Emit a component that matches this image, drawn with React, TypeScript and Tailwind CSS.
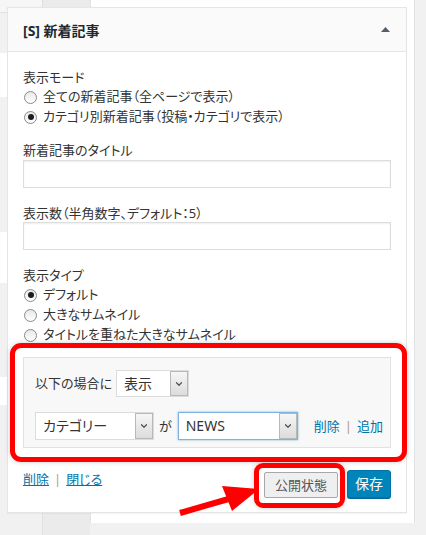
import { ChevronDown } from "lucide-react";

function Radio({ checked, label }: { checked?: boolean; label: string }) {
  return (
    <label className="flex items-center h-[20px]">
      <span className="ml-px w-[13px] h-[13px] shrink-0 rounded-full border border-[#8a8a8a] bg-[linear-gradient(#e8e8e8,#fff)] flex items-center justify-center">
        {checked && <span className="w-[6px] h-[6px] rounded-full bg-[#1c1c1c]" />}
      </span>
      <span className="ml-[6px] whitespace-nowrap">{label}</span>
    </label>
  );
}

function Select({
  value,
  className,
  focused,
}: {
  value: string;
  className: string;
  focused?: boolean;
}) {
  return (
    <div
      className={`${className} shrink-0 flex items-stretch bg-white border ${
        focused
          ? "border-[#7fb3df] shadow-[0_0_2px_rgba(30,140,190,0.6)]"
          : "border-[#dcdcdc]"
      }`}
    >
      <span className="flex-1 pl-[7px] flex items-center text-[14px] text-[#333] leading-none whitespace-nowrap">
        {value}
      </span>
      <span className="w-[18px] flex items-center justify-center border border-[#b8b8b8] bg-[linear-gradient(#f6f6f6,#dcdcdc)]">
        <ChevronDown size={10} strokeWidth={3} color="#555" />
      </span>
    </div>
  );
}

function TextInput() {
  return (
    <div className="h-[28px] bg-white border border-[#dddddd] shadow-[inset_0_1px_2px_rgba(0,0,0,0.07)]" />
  );
}

export default function App() {
  return (
    <div className="relative w-[426px] h-[535px] overflow-hidden bg-[#f1f1f1] font-['Noto_Sans','Noto_Sans_CJK_JP',sans-serif] [font-feature-settings:'palt'] text-[13px] text-[#333]">
      {/* admin columns behind the widget */}
      <div className="flex h-full">
        <div className="w-[42px] flex flex-col">
          <div className="h-[13px] bg-[#f6f6f6] border-b border-[#e2e2e2]" />
          <div className="h-[40px]" />
          <div className="h-[44px] bg-white" />
          <div className="h-[135px]" />
          <div className="h-[51px] bg-white" />
          <div className="h-[94px]" />
          <div className="h-[28px] bg-white" />
        </div>
        <div className="w-[48px] bg-[#ebebeb] border-l border-[#e0e0e0]" />
        <div className="w-[325px] h-[523px] bg-white border-l border-r border-[#e2e2e2]" />
      </div>

      {/* widget panel */}
      <div className="absolute left-[7px] top-[7px] w-[400px] bg-white border border-[#e5e5e5] shadow-[0_1px_1px_rgba(0,0,0,0.04)]">
        <div className="h-[44px] bg-[#fafafa] border-b border-[#e5e5e5] px-[15px] pt-[2px] flex items-center justify-between">
          <h3 className="text-[14px] font-bold text-[#23282d] leading-none">
            [S] 新着記事
          </h3>
          <svg width="9" height="5" viewBox="0 0 9 5" className="mr-[1px] mt-[-3px]">
            <path d="M0 5 L4.5 0 L9 5 Z" fill="#555d66" />
          </svg>
        </div>

        <div className="px-[15px] pt-[15px] pb-[14px]">
          <p className="leading-[20px]">表示モード</p>
          <Radio label="全ての新着記事（全ページで表示）" />
          <Radio checked label="カテゴリ別新着記事（投稿・カテゴリで表示）" />

          <p className="mt-[14px] leading-[19px]">新着記事のタイトル</p>
          <TextInput />

          <p className="mt-[16px] leading-[18px]">表示数（半角数字、デフォルト：5）</p>
          <TextInput />

          <p className="mt-[15px] leading-[20px]">表示タイプ</p>
          <Radio checked label="デフォルト" />
          <Radio label="大きなサムネイル" />
          <Radio label="タイトルを重ねた大きなサムネイル" />

          {/* visibility conditions */}
          <div className="mt-[12px] bg-[#f8f8f8] border border-[#e2e2e2] px-[11px] pt-[12px] pb-[7px]">
            <div className="flex items-center h-[27px]">
              <span className="leading-none whitespace-nowrap">以下の場合に</span>
              <Select value="表示" className="ml-[4px] w-[73px] h-[27px]" />
            </div>
            <div className="flex items-center h-[28px] mt-[15px] whitespace-nowrap">
              <Select value="カテゴリー" className="w-[119px] h-[28px]" />
              <span className="ml-[5px] mr-[6px] leading-none">が</span>
              <Select value="NEWS" focused className="w-[120px] h-[28px]" />
              <span className="ml-[16px] text-[#0073aa] leading-none">削除</span>
              <span className="mx-[5px] text-[#b49a7e] leading-none">|</span>
              <span className="text-[#0073aa] leading-none">追加</span>
            </div>
          </div>

          <div className="mt-[22px] flex items-start justify-between">
            <div className="leading-[18px] flex whitespace-nowrap">
              <a className="text-[#0073aa] underline">削除</a>
              <span className="mx-[5px] text-[#b49a7e]">|</span>
              <a className="text-[#0073aa] underline">閉じる</a>
            </div>
            <div className="flex items-end gap-[9px] h-[28px]">
              <button className="w-[74px] h-[26px] bg-[#efefef] border border-[#a8a8a8] rounded-[2px] text-[13px] text-[#555] leading-none">
                公開状態
              </button>
              <button className="w-[44px] h-[28px] bg-[#0085ba] border border-[#0073aa] rounded-[3px] text-[14px] text-white leading-none shadow-[0_1px_0_#006799]">
                保存
              </button>
            </div>
          </div>
        </div>
      </div>

      {/* red annotation marks */}
      <div className="absolute left-[10px] top-[343px] w-[397px] h-[119px] border-[5px] border-[#ff0000] rounded-[11px] shadow-[0_0_5px_rgba(0,0,0,0.2)]" />
      <div className="absolute left-[254px] top-[463px] w-[91px] h-[45px] border-[5px] border-[#ff0000] rounded-[9px] shadow-[0_0_5px_rgba(0,0,0,0.2)]" />
      <svg className="absolute left-0 top-0" width="426" height="535" viewBox="0 0 426 535">
        <line x1="180" y1="513" x2="232" y2="498" stroke="#ff0000" strokeWidth="6" />
        <path d="M259 489 L222 486 L232 511 Z" fill="#ff0000" />
      </svg>
    </div>
  );
}
